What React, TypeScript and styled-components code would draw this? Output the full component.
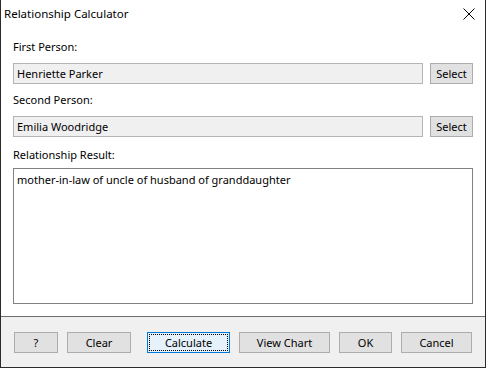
import React from "react";
import styled, { createGlobalStyle } from "styled-components";

const Global = createGlobalStyle`
  html, body { margin: 0; padding: 0; background: #ffffff; }
  body { font-family: "Noto Sans", "Segoe UI", sans-serif; font-size: 11px; color: #000; }
`;

const Window = styled.div`
  width: 486px;
  height: 368px;
  box-sizing: border-box;
  border: 1px solid #2b2b2b;
  border-top: none;
  display: flex;
  flex-direction: column;
  background: #ffffff;
`;

const TitleBar = styled.div`
  height: 30px;
  flex: none;
  display: flex;
  align-items: center;
  justify-content: space-between;
  padding: 0 10px 2px 3px;
  box-sizing: border-box;
`;

const Title = styled.span`
  font-size: 11.5px;
  line-height: 16px;
`;

const Content = styled.div`
  flex: 1;
  display: flex;
  flex-direction: column;
  padding: 9px 12px 0 12px;
`;

const Label = styled.div<{ $top?: number }>`
  line-height: 16px;
  height: 16px;
  margin-top: ${(p) => p.$top ?? 0}px;
`;

const Row = styled.div`
  display: flex;
  gap: 7px;
  margin-top: 8px;
`;

const Field = styled.div`
  flex: 1;
  height: 21px;
  box-sizing: border-box;
  border: 1px solid #b4b4b4;
  background: #f0f0f0;
  padding: 0 3px;
  line-height: 19px;
  white-space: nowrap;
  overflow: hidden;
`;

const Button = styled.button<{ $w: number; $focus?: boolean }>`
  width: ${(p) => p.$w}px;
  height: 21px;
  box-sizing: border-box;
  margin: 0;
  padding: 0;
  font: inherit;
  font-size: 11px;
  color: #000;
  border: 1px solid ${(p) => (p.$focus ? "#0078d7" : "#adadad")};
  background: ${(p) => (p.$focus ? "#e5f1fb" : "#e1e1e1")};
  position: relative;
  line-height: 19px;
  flex: none;
  ${(p) =>
    p.$focus
      ? `&::after { content: ""; position: absolute; inset: 1px; border: 1px dotted #000; }`
      : ""}
`;

const ResultBox = styled.div`
  margin-top: 5px;
  height: 136px;
  box-sizing: border-box;
  border: 1px solid #828282;
  background: #fff;
  padding: 3px 3px;
  line-height: 16px;
`;

const Footer = styled.div`
  flex: none;
  height: 51px;
  box-sizing: border-box;
  border-top: 1px solid #6d6d6d;
  background: #f0f0f0;
  margin-top: 12px;
  display: flex;
  align-items: flex-start;
  gap: 9px;
  padding: 15px 0 0 13px;
`;

const Spacer = styled.div`
  width: 7px;
  flex: none;
  margin-left: -9px;
`;

const CloseIcon = () => (
  <svg width="12" height="12" viewBox="0 0 12 12">
    <path d="M0.5 0.5 L11.5 11.5 M11.5 0.5 L0.5 11.5" stroke="#000" strokeWidth="1" fill="none" />
  </svg>
);

export default function App() {
  return (
    <>
      <Global />
      <Window>
        <TitleBar>
          <Title>Relationship Calculator</Title>
          <CloseIcon />
        </TitleBar>
        <Content>
          <Label>First Person:</Label>
          <Row>
            <Field>Henriette Parker</Field>
            <Button $w={43}>Select</Button>
          </Row>
          <Label $top={8}>Second Person:</Label>
          <Row>
            <Field>Emilia Woodridge</Field>
            <Button $w={43}>Select</Button>
          </Row>
          <Label $top={10}>Relationship Result:</Label>
          <ResultBox>mother-in-law of uncle of husband of granddaughter</ResultBox>
        </Content>
        <Footer>
          <Button $w={44}>?</Button>
          <Button $w={64}>Clear</Button>
          <Spacer />
          <Button $w={83} $focus>Calculate</Button>
          <Button $w={91}>View Chart</Button>
          <Button $w={53}>OK</Button>
          <Button $w={71}>Cancel</Button>
        </Footer>
      </Window>
    </>
  );
}
